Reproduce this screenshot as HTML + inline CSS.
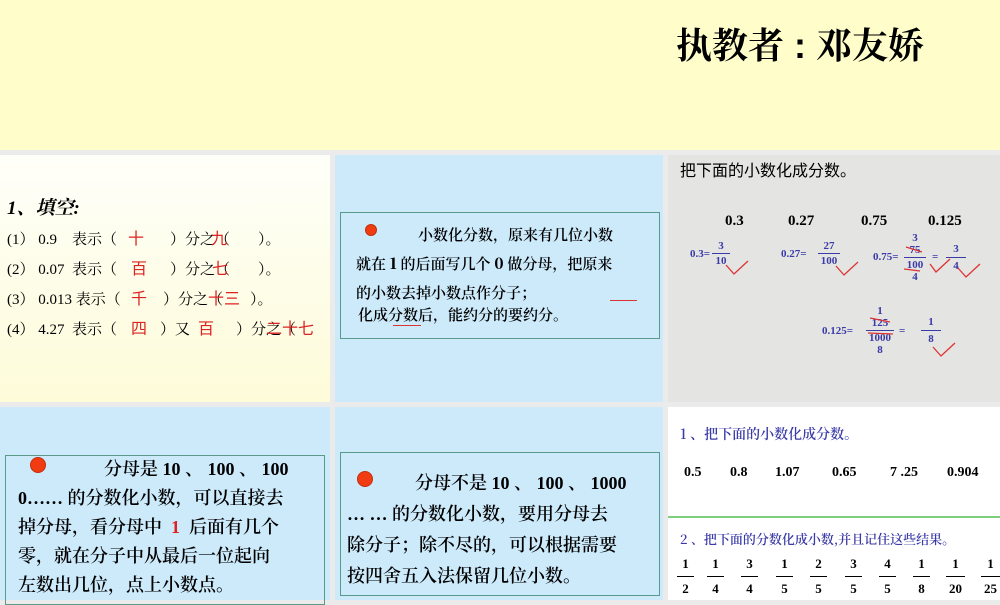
<!DOCTYPE html>
<html><head><meta charset="utf-8"><style>
*{margin:0;padding:0;box-sizing:border-box}
body{width:1000px;height:600px;overflow:hidden;background:#ebebeb;position:relative;font-family:"Liberation Serif","Noto Serif CJK SC","Noto Sans CJK SC",serif;color:#000}
.a{position:absolute;white-space:nowrap}
.p{position:absolute}
.r{color:#d22}
.rr{position:absolute;color:#d22;font-size:16px;font-family:"Noto Sans CJK SC",sans-serif;white-space:nowrap}
.b{color:#3a3aa8;font-weight:bold;font-family:"Liberation Serif",serif}
.dot{position:absolute;width:16px;height:16px;border-radius:50%;background:#f03c10;border:1px solid #c03010}
.box{position:absolute;border:1.5px solid #5a9a8a}
.frac{position:absolute;text-align:center;font-weight:bold;font-family:"Liberation Serif",serif;font-size:13px;line-height:16px}
.frac i{display:block;border-top:1.3px solid #000;font-style:normal;margin-top:4px;padding-top:4px}
.l{position:absolute;white-space:nowrap;font-size:15px;font-family:"Liberation Serif","Noto Serif CJK SC",serif}
</style></head><body>
<div class="p" style="left:0;top:0;width:1000px;height:150px;background:#fffecb"></div>
<div class="a" style="left:676px;top:18px;font-size:36px;font-family:'Noto Serif CJK SC','Noto Sans CJK SC',serif;font-weight:bold">执教者<span style="font-family:'Liberation Sans'"> : </span>邓友娇</div>

<!-- panel1 -->
<div class="p" style="left:0;top:155px;width:330px;height:247px;background:linear-gradient(#fffffa,#fdfbd8)"></div>
<div class="a" style="left:7px;top:193px;font-size:19px;font-style:italic;font-weight:bold">1、填空:</div>
<div class="l" style="left:7px;top:228px">(1） 0.9&nbsp;&nbsp;&nbsp;&nbsp;表示（</div>
<div class="l" style="left:170px;top:228px">）分之（</div>
<div class="l" style="left:258px;top:228px">）。</div>
<div class="rr" style="left:128px;top:225px">十</div><div class="rr" style="left:211px;top:225px">九</div>
<div class="l" style="left:7px;top:258px">(2） 0.07&nbsp;&nbsp;表示（</div>
<div class="l" style="left:170px;top:258px">）分之（</div>
<div class="l" style="left:258px;top:258px">）。</div>
<div class="rr" style="left:131px;top:255px">百</div><div class="rr" style="left:212px;top:255px">七</div>
<div class="l" style="left:7px;top:288px">(3） 0.013 表示（</div>
<div class="l" style="left:163px;top:288px">）分之（</div>
<div class="l" style="left:250px;top:288px">）。</div>
<div class="rr" style="left:131px;top:285px">千</div><div class="rr" style="left:208px;top:285px">十三</div>
<div class="l" style="left:7px;top:318px">(4） 4.27&nbsp;&nbsp;表示（</div>
<div class="l" style="left:160px;top:318px">）又</div>
<div class="l" style="left:236px;top:318px">）分之（</div>
<div class="rr" style="left:131px;top:315px">四</div><div class="rr" style="left:198px;top:315px">百</div><div class="rr" style="left:266px;top:315px">二十七</div>

<!-- panel2 -->
<div class="p" style="left:335px;top:155px;width:328px;height:247px;background:#cdeafb"></div>
<div class="box" style="left:340px;top:212px;width:320px;height:127px"></div>
<div class="dot" style="left:365px;top:224px;width:12px;height:12px"></div>
<div class="a" style="left:356px;top:220px;font-size:15px;line-height:29px;font-family:'Noto Serif CJK SC',serif;font-weight:600">
<span style="padding-left:62px">小数化分数，原来有几位小数</span><br>就在 <b>1</b> 的后面写几个 <b>0</b> 做分母，把原来<br>的小数去掉小数点作分子；</div>
<div class="a" style="left:358px;top:304px;font-size:15px;font-family:'Noto Serif CJK SC',serif;font-weight:600">化成分数后，能约分的要约分。</div>
<div class="p" style="left:610px;top:300px;width:27px;height:1px;background:#d33"></div>
<div class="p" style="left:393px;top:325px;width:28px;height:1px;background:#d33"></div>

<!-- panel3 -->
<div class="p" style="left:668px;top:155px;width:332px;height:247px;background:#e4e4e2"></div>
<div class="a" style="left:680px;top:157px;font-size:16px;font-family:'Noto Sans CJK SC',sans-serif">把下面的小数化成分数。</div>
<div class="a" style="left:725px;top:213px;font-size:15px;font-weight:bold">0.3</div>
<div class="a" style="left:788px;top:213px;font-size:15px;font-weight:bold">0.27</div>
<div class="a" style="left:861px;top:213px;font-size:15px;font-weight:bold">0.75</div>
<div class="a" style="left:928px;top:213px;font-size:15px;font-weight:bold">0.125</div>
<div class="a b" style="left:690px;top:248px;font-size:11px">0.3=</div>
<div class="frac b" style="left:712px;top:240px;width:18px;font-size:11px;line-height:12px"><span>3</span><i style="border-color:#3a3aa8;margin-top:1px;padding-top:1px">10</i></div>
<div class="a b" style="left:781px;top:248px;font-size:11px">0.27=</div>
<div class="frac b" style="left:818px;top:240px;width:22px;font-size:11px;line-height:12px"><span>27</span><i style="border-color:#3a3aa8;margin-top:1px;padding-top:1px">100</i></div>
<div class="a b" style="left:873px;top:251px;font-size:11px">0.75=</div>
<div class="frac b" style="left:904px;top:232px;width:22px;font-size:11px;line-height:12px"><span>3</span><br><span>75</span><i style="border-color:#3a3aa8;margin-top:1px;padding-top:1px">100</i><span>4</span></div>
<div class="a b" style="left:932px;top:251px;font-size:11px">=</div>
<div class="frac b" style="left:946px;top:243px;width:20px;font-size:11px;line-height:12px"><span>3</span><i style="border-color:#3a3aa8;margin-top:2px;padding-top:2px">4</i></div>
<div class="a b" style="left:822px;top:325px;font-size:11px">0.125=</div>
<div class="frac b" style="left:866px;top:305px;width:28px;font-size:11px;line-height:12px"><span>1</span><br><span>125</span><i style="border-color:#3a3aa8;margin-top:1px;padding-top:1px">1000</i><span>8</span></div>
<div class="a b" style="left:899px;top:325px;font-size:11px">=</div>
<div class="frac b" style="left:921px;top:316px;width:20px;font-size:11px;line-height:12px"><span>1</span><i style="border-color:#3a3aa8;margin-top:2px;padding-top:2px">8</i></div>
<svg class="p" style="left:668px;top:155px" width="332" height="247" fill="none" stroke="#d33" stroke-width="1.3">
<path d="M58 110l8 9 14-13M168 111l8 9 14-13M262 109l6 8 14-13M290 113l8 9 14-13M265 192l8 9 14-13M238 92l16 5M236 114l16 2M202 163l20 4M200 178l25 1"/></svg>

<!-- panel4 -->
<div class="p" style="left:0;top:407px;width:330px;height:193px;background:#cdeafb"></div>
<div class="box" style="left:5px;top:455px;width:320px;height:150px"></div>
<div class="dot" style="left:30px;top:457px"></div>
<div class="a" style="left:18px;top:455px;font-size:18px;line-height:29px;font-family:'Liberation Serif','Noto Serif CJK SC',serif;font-weight:600">
<span style="padding-left:86px">分母是 <b>10</b> 、 <b>100</b> 、 <b>100</b></span><br><b>0……</b> 的分数化小数，可以直接去<br>掉分母，看分母中&nbsp;&nbsp;<b class="r">1</b>&nbsp;&nbsp;后面有几个<br>零，就在分子中从最后一位起向<br>左数出几位，点上小数点。</div>

<!-- panel5 -->
<div class="p" style="left:335px;top:407px;width:328px;height:193px;background:#cdeafb"></div>
<div class="box" style="left:340px;top:452px;width:320px;height:144px"></div>
<div class="dot" style="left:357px;top:471px"></div>
<div class="a" style="left:347px;top:468px;font-size:18px;line-height:31px;font-family:'Liberation Serif','Noto Serif CJK SC',serif;font-weight:600">
<span style="padding-left:68px">分母不是 <b>10</b> 、 <b>100</b> 、 <b>1000</b></span><br><b>… …</b> 的分数化小数，要用分母去<br>除分子；除不尽的，可以根据需要<br>按四舍五入法保留几位小数。</div>

<!-- panel6 -->
<div class="p" style="left:668px;top:407px;width:332px;height:193px;background:#fff"></div>
<div class="p" style="left:668px;top:516px;width:332px;height:2px;background:#7ccf7c"></div>
<div class="a" style="left:680px;top:424px;font-size:14px;color:#3a3aa8;font-family:'Noto Serif CJK SC',serif;font-weight:600">1 、把下面的小数化成分数。</div>
<div class="a" style="top:465px;left:684px;font-size:14px;font-weight:bold">0.5</div>
<div class="a" style="top:465px;left:730px;font-size:14px;font-weight:bold">0.8</div>
<div class="a" style="top:465px;left:775px;font-size:14px;font-weight:bold">1.07</div>
<div class="a" style="top:465px;left:832px;font-size:14px;font-weight:bold">0.65</div>
<div class="a" style="top:465px;left:890px;font-size:14px;font-weight:bold">7 .25</div>
<div class="a" style="top:465px;left:947px;font-size:14px;font-weight:bold">0.904</div>
<div class="a" style="left:680px;top:529px;font-size:13px;color:#3a3aa8;font-family:'Noto Serif CJK SC',serif;font-weight:600">2 、把下面的分数化成小数,并且记住这些结果。</div>
<div class="frac" style="left:677px;top:556px;width:17px"><span>1</span><i>2</i></div>
<div class="frac" style="left:707px;top:556px;width:17px"><span>1</span><i>4</i></div>
<div class="frac" style="left:741px;top:556px;width:17px"><span>3</span><i>4</i></div>
<div class="frac" style="left:776px;top:556px;width:17px"><span>1</span><i>5</i></div>
<div class="frac" style="left:810px;top:556px;width:17px"><span>2</span><i>5</i></div>
<div class="frac" style="left:845px;top:556px;width:17px"><span>3</span><i>5</i></div>
<div class="frac" style="left:879px;top:556px;width:17px"><span>4</span><i>5</i></div>
<div class="frac" style="left:913px;top:556px;width:17px"><span>1</span><i>8</i></div>
<div class="frac" style="left:946px;top:556px;width:19px"><span>1</span><i>20</i></div>
<div class="frac" style="left:981px;top:556px;width:19px"><span>1</span><i>25</i></div>
</body></html>
